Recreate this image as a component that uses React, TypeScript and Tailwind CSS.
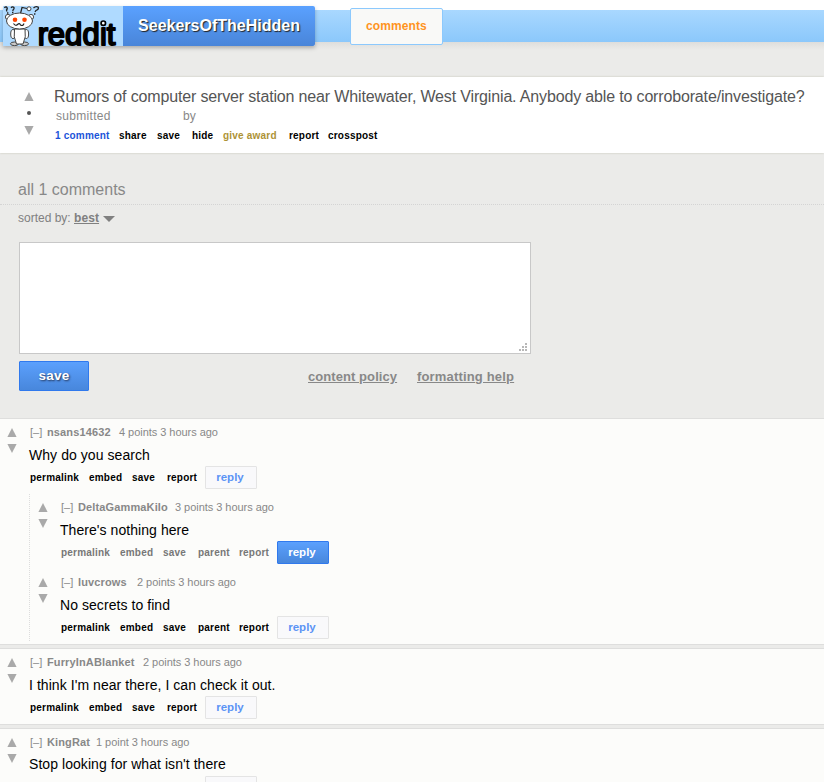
import React from "react";

function Up() {
  return (
    <svg width="10" height="9" viewBox="0 0 10 9" className="block">
      <path d="M5 0 L9.6 9 H0.4 Z" fill="#a9a9a9" />
    </svg>
  );
}

function Down() {
  return (
    <svg width="10" height="9" viewBox="0 0 10 9" className="block">
      <path d="M5 9 L9.6 0 H0.4 Z" fill="#a9a9a9" />
    </svg>
  );
}

function Logo() {
  return (
    <svg width="120" height="40" viewBox="3 6 120 40" className="block overflow-visible">
      <g fill="none" stroke="#222" strokeWidth="1.3">
        <path d="M4.5 8 Q5 6.7 6.5 7 Q8 8.5 6.5 10 L7 11.5" />
        <path d="M11 7.8 Q12.5 6 14 7.5 Q14.5 9 13 10 L12.8 11" />
        <path d="M33.5 8 Q35.5 6 38 7 Q39.5 9 36 10.5 L35 12" />
        <path d="M20.5 13.5 L22 7.5 L27 8.5" strokeWidth="1.2" />
      </g>
      <path d="M7 13 h1.4 M12 12.5 h1.4 M34 14 h1.4" stroke="#222" strokeWidth="1.3" />
      <g fill="#fff" stroke="#444" strokeWidth="1">
        <circle cx="29" cy="8.8" r="2" />
        <ellipse cx="14.5" cy="43.8" rx="4" ry="1.8" fill="#ccc" />
        <ellipse cx="24.5" cy="43.8" rx="4" ry="1.8" fill="#ccc" />
        <ellipse cx="13" cy="34" rx="2.3" ry="4.5" />
        <ellipse cx="26.3" cy="34" rx="2.3" ry="4.5" />
        <path d="M14.5 29 H25 Q26.5 37 23 44 H16.5 Q13 37 14.5 29 Z" />
        <circle cx="8" cy="17" r="2.6" />
        <circle cx="31" cy="17" r="2.6" />
        <ellipse cx="19.5" cy="21" rx="13" ry="8" />
      </g>
      <circle cx="15" cy="19.7" r="2.3" fill="#ff4500" />
      <circle cx="24.5" cy="19.7" r="2.3" fill="#ff4500" />
      <path d="M13.5 23.5 Q15.5 26.5 17.5 24.5 Q19.5 22.5 20.5 25 Q23 26.5 24 23.5" fill="none" stroke="#222" strokeWidth="1.1" />
      <text
        x="37.8 47.7 64.9 82.4 99.9 106.8"
        y="44.7"
        fontSize="31"
        fontFamily="'Liberation Sans', sans-serif"
        fill="#000"
        stroke="#000"
        strokeWidth="1.9"
        strokeLinejoin="round"
      >
        reddit
      </text>
      <circle cx="103.3" cy="23.2" r="2.2" fill="#fff" stroke="#000" strokeWidth="1.7" />
    </svg>
  );
}

function Action({ w, children, color = "text-black" }: { w: string; children: string; color?: string }) {
  return <span className={`block shrink-0 text-[10px] font-bold tracking-[0.2px] ${w} ${color}`}>{children}</span>;
}

type CommentProps = {
  name: string;
  nameW: string;
  meta: string;
  body: string;
  child?: boolean;
  muted?: boolean;
  last?: boolean;
};

function Comment({ name, nameW, meta, body, child, muted, last }: CommentProps) {
  const c = muted ? "text-[#777]" : "text-black";
  return (
    <div className="flex h-[67px]">
      <div className="flex w-[30px] shrink-0 flex-col gap-[7px] pt-[6px] pl-[7px]">
        <Up />
        <Down />
      </div>
      <div className="flex flex-col">
        <div className="flex h-5 items-center text-[11px] leading-5 text-[#888]">
          <span className="w-[17px]">[–]</span>
          <span className={`font-bold tracking-[0.13px] ${nameW}`}>{name}</span>
          <span className="tracking-[-0.04px]">{meta}</span>
        </div>
        <div className={`-ml-px h-6 text-[14px] tracking-[0.06px] text-black ${last ? "leading-6" : "leading-[26px]"}`}>{body}</div>
        <div className="flex h-[23px] items-center">
          <Action w="w-[59px]" color={c}>permalink</Action>
          <Action w="w-[43px]" color={c}>embed</Action>
          <Action w="w-[35px]" color={c}>save</Action>
          {child && <Action w="w-[41px]" color={c}>parent</Action>}
          <Action w="w-[38px]" color={c}>report</Action>
          {muted ? (
            <span className="flex h-[23px] w-[52px] items-center justify-center rounded-[1px] border border-[#3079ed] bg-linear-to-b from-[#5ba0fd] to-[#4887dc] pr-0.5 text-[11.5px] font-bold text-white">reply</span>
          ) : (
            <span className="flex h-[23px] w-[52px] items-center justify-center rounded-[1px] border border-[#e4e4e4] bg-[#f9f9fb] pr-0.5 text-[11.5px] font-bold text-[#5c94f5]">reply</span>
          )}
        </div>
      </div>
    </div>
  );
}

export default function App() {
  return (
    <div className="h-[782px] w-[824px] overflow-hidden bg-[#ebebe9] font-['Liberation_Sans',Arial,sans-serif] whitespace-nowrap">
      <header className="h-[77px] bg-[linear-gradient(to_bottom,#fff_10px,#a9d8ff_10px,#8bc8fb_42px,#dededc_42px,#ebebe9_50px)]">
        <div className="flex pl-[3px]">
          <div className="mt-[6px] flex h-10 shadow-[0_2px_4px_rgba(0,0,0,0.25)]">
            <div className="w-[120px] bg-[#afdaff]">
              <Logo />
            </div>
            <div className="flex w-[192px] items-center justify-center rounded-r-[2px] bg-linear-to-b from-[#5aa1ff] to-[#4985d9] pb-px text-[16px] font-bold text-white [text-shadow:1px_1px_1px_#222]">
              SeekersOfTheHidden
            </div>
          </div>
          <div className="mt-2 ml-[35px] flex h-[37px] w-[93px] items-center justify-center rounded-[2px] border border-[#8cc9fd] bg-[#f9f9f7] pb-0.5 text-[12px] font-bold tracking-[0.1px] text-[#ff941f]">
            comments
          </div>
        </div>
      </header>

      <section className="flex h-[76px] bg-white shadow-[0_0_2px_#c4c4b4]">
        <div className="flex w-[54px] shrink-0 flex-col items-center pt-[15px] pr-0.5 pl-[5px]">
          <Up />
          <div className="mt-[10px] mb-[11px] size-1 rounded-full bg-[#555]" />
          <Down />
        </div>
        <div className="flex flex-col">
          <div className="mt-2 h-[23px] text-[16px] leading-6 tracking-[-0.155px] text-[#555]">
            Rumors of computer server station near Whitewater, West Virginia. Anybody able to corroborate/investigate?
          </div>
          <div className="flex h-4 pl-0.5 text-[12px] leading-4 text-[#888]">
            <span className="w-[127px] tracking-[0.3px]">submitted</span>
            <span>by</span>
          </div>
          <div className="flex h-5 items-center pt-0.5 pl-px">
            <Action w="w-[64px]" color="text-[#1a54d9]">1 comment</Action>
            <Action w="w-[38px]">share</Action>
            <Action w="w-[35px]">save</Action>
            <Action w="w-[31px]">hide</Action>
            <Action w="w-[66px]" color="text-[#ad9236]">give award</Action>
            <Action w="w-[39px]">report</Action>
            <Action w="w-[60px]">crosspost</Action>
          </div>
        </div>
      </section>

      <section className="h-[265px]">
        <div className="h-[52px] border-b border-dotted border-[#d4d4d4] pt-[27px] pl-[18px] text-[16px] leading-5 text-[#888]">
          all 1 comments
        </div>
        <div className="flex h-[37px] items-start pt-[5px] pl-[18px] text-[12px] leading-4 text-[#808080]">
          <span className="w-[56px]">sorted by:</span>
          <span className="w-[29px] font-bold tracking-[0.1px] underline">best</span>
          <svg width="12" height="6" viewBox="0 0 12 6" className="mt-[6px]">
            <path d="M0 0 H12 L6 6 Z" fill="#808080" />
          </svg>
        </div>
        <div className="ml-[19px] flex h-[112px] w-[512px] items-end justify-end border border-[#c8c8c8] bg-white p-[3px] pb-0.5">
          <svg width="8" height="8" viewBox="0 0 8 8">
            <path d="M6 0h2v2H6z M3 3h2v2H3z M6 3h2v2H6z M0 6h2v2H0z M3 6h2v2H3z M6 6h2v2H6z" fill="#b8b8b8" />
          </svg>
        </div>
        <div className="mt-[7px] ml-[19px] flex h-[30px] items-center text-[13px] font-bold text-[#888]">
          <span className="mr-[219px] flex h-[30px] w-[70px] items-center justify-center rounded-[1px] border border-[#3079ed] bg-linear-to-b from-[#5ba0fd] to-[#4887dc] pt-px text-[13.5px] tracking-[0.2px] text-white [text-shadow:1px_1px_2px_#235]">
            save
          </span>
          <span className="w-[109px] pt-0.5 tracking-[0.07px] underline">content policy</span>
          <span className="pt-0.5 tracking-[0.17px] underline">formatting help</span>
        </div>
      </section>

      <main className="flex flex-col gap-[3px]">
        <article className="h-[227px] border-y border-[#dededd] bg-[#fcfcfa] pt-[3px]">
          <Comment name="nsans14632" nameW="w-[72px]" meta="4 points 3 hours ago" body="Why do you search" />
          <div className="mt-[5px] ml-[29px] flex h-[147px] flex-col gap-2 border-l border-dotted border-[#ddd] pt-[3px] pl-px">
            <Comment child muted name="DeltaGammaKilo" nameW="w-[97px]" meta="3 points 3 hours ago" body="There's nothing here" />
            <Comment child name="luvcrows" nameW="w-[59px]" meta="2 points 3 hours ago" body="No secrets to find" />
          </div>
        </article>
        <article className="h-[77px] border-y border-[#dededd] bg-[#fcfcfa] pt-[3px]">
          <Comment name="FurryInABlanket" nameW="w-[96px]" meta="2 points 3 hours ago" body="I think I'm near there, I can check it out." />
        </article>
        <article className="h-[77px] border-y border-[#dededd] bg-[#fcfcfa] pt-[3px]">
          <Comment last name="KingRat" nameW="w-[49px]" meta="1 point 3 hours ago" body="Stop looking for what isn't there" />
        </article>
      </main>
    </div>
  );
}
